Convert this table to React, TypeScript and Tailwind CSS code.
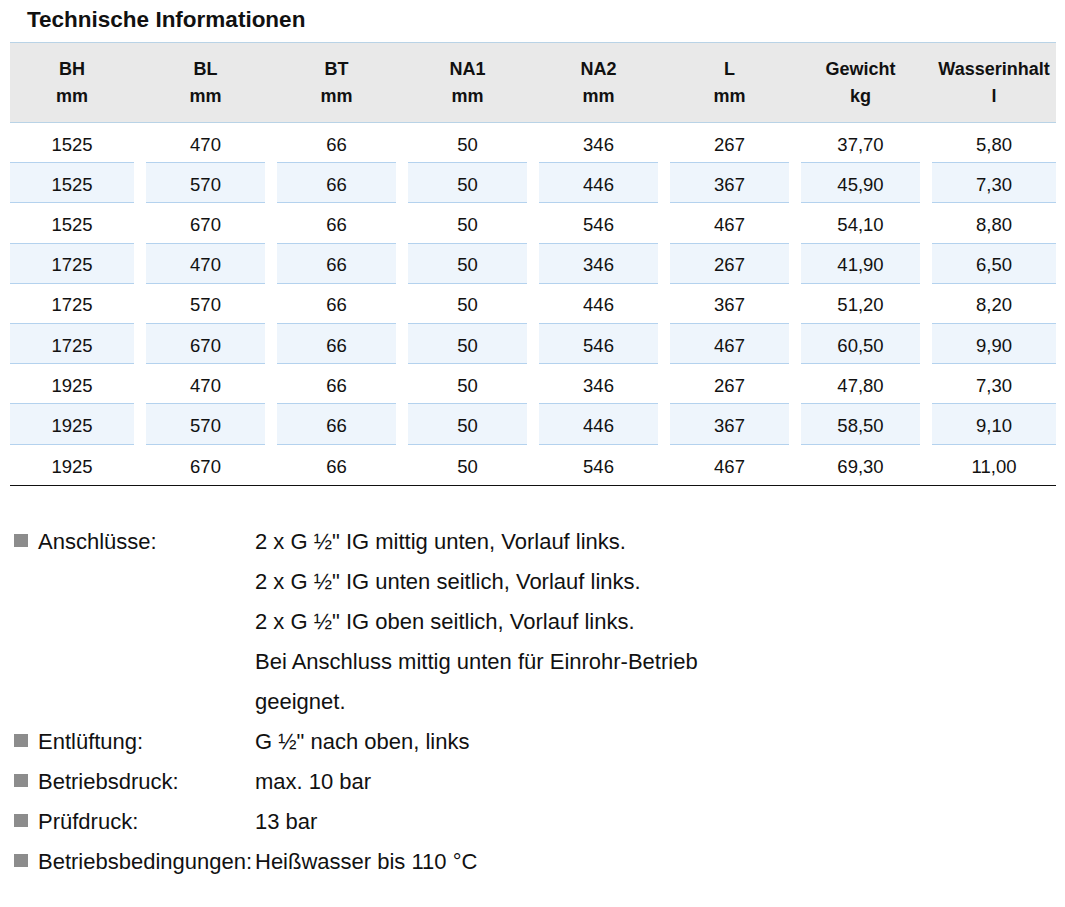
const HEAD = [
  ["BH", "mm"],
  ["BL", "mm"],
  ["BT", "mm"],
  ["NA1", "mm"],
  ["NA2", "mm"],
  ["L", "mm"],
  ["Gewicht", "kg"],
  ["Wasserinhalt", "l"],
];

const ROWS = [
  ["1525", "470", "66", "50", "346", "267", "37,70", "5,80"],
  ["1525", "570", "66", "50", "446", "367", "45,90", "7,30"],
  ["1525", "670", "66", "50", "546", "467", "54,10", "8,80"],
  ["1725", "470", "66", "50", "346", "267", "41,90", "6,50"],
  ["1725", "570", "66", "50", "446", "367", "51,20", "8,20"],
  ["1725", "670", "66", "50", "546", "467", "60,50", "9,90"],
  ["1925", "470", "66", "50", "346", "267", "47,80", "7,30"],
  ["1925", "570", "66", "50", "446", "367", "58,50", "9,10"],
  ["1925", "670", "66", "50", "546", "467", "69,30", "11,00"],
];

const SPECS = [
  {
    label: "Anschlüsse:",
    lines: [
      "2 x G ½\" IG mittig unten, Vorlauf links.",
      "2 x G ½\" IG unten seitlich, Vorlauf links.",
      "2 x G ½\" IG oben seitlich, Vorlauf links.",
      "Bei Anschluss mittig unten für Einrohr-Betrieb",
      "geeignet.",
    ],
  },
  { label: "Entlüftung:", lines: ["G ½\" nach oben, links"] },
  { label: "Betriebsdruck:", lines: ["max. 10 bar"] },
  { label: "Prüfdruck:", lines: ["13 bar"] },
  { label: "Betriebsbedingungen:", lines: ["Heißwasser bis 110 °C"] },
];

const COLS = "grid grid-cols-[124px_repeat(6,119px)_124px] gap-x-[12px]";

export default function App() {
  return (
    <div className="w-[1065px] h-[907px] bg-white text-[#111] font-['Liberation_Sans_Narrow','Liberation_Sans',sans-serif]">
      <h1 className="pl-[27px] pt-[5px] h-[42px] text-[22.5px] leading-[30px] font-bold">
        Technische Informationen
      </h1>

      <div className="ml-[10px] w-[1046px]">
        {/* header */}
        <div className="bg-[#e9e9e9] border-t border-b border-[#b9d3e6] h-[81px] flex items-center">
          <div className={COLS + " w-full pt-[1px]"}>
            {HEAD.map(([a, b]) => (
              <div key={a} className="text-center font-bold text-[18px] leading-[27px]">
                <div>{a}</div>
                <div>{b}</div>
              </div>
            ))}
          </div>
        </div>

        {/* rows */}
        {ROWS.map((row, i) => {
          const last = i === ROWS.length - 1;
          return (
            <div
              key={i}
              className={COLS + (last ? " border-b border-[#111] gap-x-0" : "")}
            >
              {row.map((v, j) => (
                <div
                  key={j}
                  className={
                    "h-[40.2px] flex items-center justify-center text-[18.5px] pt-[4px] " +
                    (last ? "" : "border-b border-[#b4d2ee] ") +
                    (i % 2 === 1 ? "bg-[#eef5fc]" : "")
                  }
                >
                  {v}
                </div>
              ))}
            </div>
          );
        })}
      </div>

      {/* specs */}
      <div className="mt-[36px] text-[22px] leading-[40px]">
        {SPECS.map((s) => (
          <div key={s.label} className="flex">
            <div className="w-[255px] flex items-start shrink-0">
              <span className="ml-[14px] mt-[12px] w-[14px] h-[13px] bg-[#8c8c8c] shrink-0" />
              <span className="ml-[10px]">{s.label}</span>
            </div>
            <div>
              {s.lines.map((l) => (
                <div key={l}>{l}</div>
              ))}
            </div>
          </div>
        ))}
      </div>
    </div>
  );
}
